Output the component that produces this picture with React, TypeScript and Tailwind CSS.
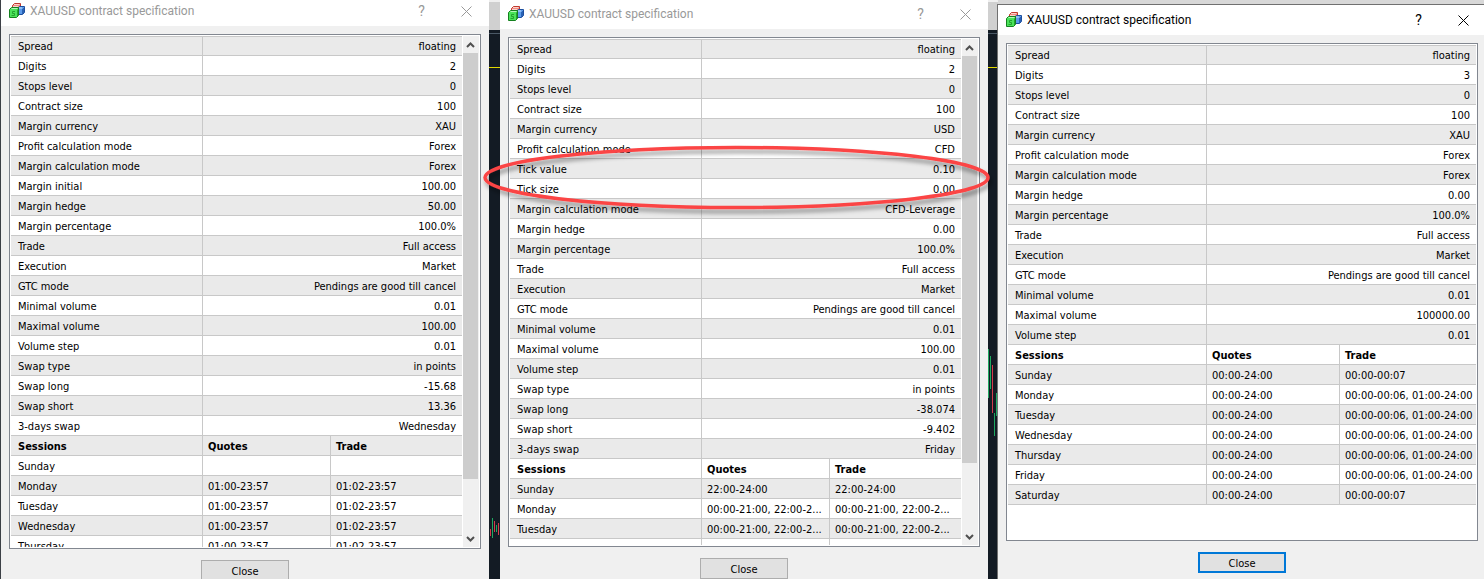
import clsx from "clsx";

type SpecRow = [string, string];
type SessionRow = [string, string, string];

interface Spec {
    rows: SpecRow[];
    sessions: SessionRow[];
}

const first: Spec = {
    rows: [
        ["Spread", "floating"],
        ["Digits", "2"],
        ["Stops level", "0"],
        ["Contract size", "100"],
        ["Margin currency", "XAU"],
        ["Profit calculation mode", "Forex"],
        ["Margin calculation mode", "Forex"],
        ["Margin initial", "100.00"],
        ["Margin hedge", "50.00"],
        ["Margin percentage", "100.0%"],
        ["Trade", "Full access"],
        ["Execution", "Market"],
        ["GTC mode", "Pendings are good till cancel"],
        ["Minimal volume", "0.01"],
        ["Maximal volume", "100.00"],
        ["Volume step", "0.01"],
        ["Swap type", "in points"],
        ["Swap long", "-15.68"],
        ["Swap short", "13.36"],
        ["3-days swap", "Wednesday"],
    ],
    sessions: [
        ["Sunday", "", ""],
        ["Monday", "01:00-23:57", "01:02-23:57"],
        ["Tuesday", "01:00-23:57", "01:02-23:57"],
        ["Wednesday", "01:00-23:57", "01:02-23:57"],
        ["Thursday", "01:00-23:57", "01:02-23:57"],
    ],
};

const second: Spec = {
    rows: [
        ["Spread", "floating"],
        ["Digits", "2"],
        ["Stops level", "0"],
        ["Contract size", "100"],
        ["Margin currency", "USD"],
        ["Profit calculation mode", "CFD"],
        ["Tick value", "0.10"],
        ["Tick size", "0.00"],
        ["Margin calculation mode", "CFD-Leverage"],
        ["Margin hedge", "0.00"],
        ["Margin percentage", "100.0%"],
        ["Trade", "Full access"],
        ["Execution", "Market"],
        ["GTC mode", "Pendings are good till cancel"],
        ["Minimal volume", "0.01"],
        ["Maximal volume", "100.00"],
        ["Volume step", "0.01"],
        ["Swap type", "in points"],
        ["Swap long", "-38.074"],
        ["Swap short", "-9.402"],
        ["3-days swap", "Friday"],
    ],
    sessions: [
        ["Sunday", "22:00-24:00", "22:00-24:00"],
        ["Monday", "00:00-21:00, 22:00-2...", "00:00-21:00, 22:00-2..."],
        ["Tuesday", "00:00-21:00, 22:00-2...", "00:00-21:00, 22:00-2..."],
        ["Wednesday", "00:00-21:00, 22:00-2...", "00:00-21:00, 22:00-2..."],
    ],
};

const third: Spec = {
    rows: [
        ["Spread", "floating"],
        ["Digits", "3"],
        ["Stops level", "0"],
        ["Contract size", "100"],
        ["Margin currency", "XAU"],
        ["Profit calculation mode", "Forex"],
        ["Margin calculation mode", "Forex"],
        ["Margin hedge", "0.00"],
        ["Margin percentage", "100.0%"],
        ["Trade", "Full access"],
        ["Execution", "Market"],
        ["GTC mode", "Pendings are good till cancel"],
        ["Minimal volume", "0.01"],
        ["Maximal volume", "100000.00"],
        ["Volume step", "0.01"],
    ],
    sessions: [
        ["Sunday", "00:00-24:00", "00:00-00:07"],
        ["Monday", "00:00-24:00", "00:00-00:06, 01:00-24:00"],
        ["Tuesday", "00:00-24:00", "00:00-00:06, 01:00-24:00"],
        ["Wednesday", "00:00-24:00", "00:00-00:06, 01:00-24:00"],
        ["Thursday", "00:00-24:00", "00:00-00:06, 01:00-24:00"],
        ["Friday", "00:00-24:00", "00:00-00:06, 01:00-24:00"],
        ["Saturday", "00:00-24:00", "00:00-00:07"],
    ],
};

function CubesIcon() {
    return (
        <svg className="size-4 shrink-0" viewBox="0 0 16 16" aria-hidden="true">
            <path d="M3.500 2.500 L5.500 0.500 H11.500 V5.500 H3.500 Z" fill="#f08a80" stroke="#c0392f" />
            <path d="M5 1.500 H10.500 M4 3.500 H9" stroke="#fbd3cd" />
            <path d="M8.500 5.500 L10.500 3.500 H15.500 V9.500 L13.500 11.500 H8.500 Z" fill="#5b9bea" stroke="#1d4f9e" />
            <path d="M13.500 6 V11 M14.500 5 V10" stroke="#2a62b4" />
            <path d="M10 5 H13" stroke="#c4defa" />
            <path d="M0.500 6.500 L2.500 4.500 H9.500 V12.500 L7.500 14.500 H0.500 Z" fill="#4be35a" stroke="#15801f" />
            <path d="M2.500 5.500 H8.500" stroke="#b4f7b8" />
            <path d="M8.500 6.500 V13" stroke="#23a32e" />
            <path d="M6 8.500 H3.500 V10.500 H5.500 V12.500 H2.500" stroke="#23a32e" fill="none" />
        </svg>
    );
}

function Arrow({ down }: { down?: boolean }) {
    return (
        <svg className="w-[9px] h-1.5" viewBox="0 0 9 6" fill="none" stroke="#505050" strokeWidth="2" aria-hidden="true">
            <path d={down ? "M1 1 L4.500 4.500 L8 1" : "M1 5 L4.500 1.500 L8 5"} />
        </svg>
    );
}

function ScrollBar({ thumb }: { thumb: string }) {
    return (
        <div className="w-4 shrink-0 pr-px bg-[#f0f0f0] flex flex-col">
            <button aria-label="Scroll up" className="h-[17px] flex items-center justify-center">
                <Arrow />
            </button>
            <div className="flex-1">
                <div className={clsx("bg-[#cdcdcd]", thumb)}></div>
            </div>
            <button aria-label="Scroll down" className="h-[17px] flex items-center justify-center">
                <Arrow down />
            </button>
        </div>
    );
}

function SpecTable({ spec, cols }: { spec: Spec; cols: [string, string] }) {
    const cell = "h-5 pt-0.5 pb-0 pr-0 border-b border-[#c8c8c8] whitespace-nowrap";
    return (
        <table className="w-full table-fixed border-separate border-spacing-0 text-[11px] leading-4 text-black">
            <colgroup>
                <col className={cols[0]} />
                <col className={cols[1]} />
                <col />
            </colgroup>
            <tbody>
                {spec.rows.map(([name, value], i) => (
                    <tr key={name} className="odd:bg-[#eaeaea]">
                        <th scope="row" className={clsx(cell, "pl-[7px] border-r text-left font-normal", i === 0 && "border-t")}>{name}</th>
                        <td colSpan={2} className={clsx("h-5 pt-0.5 pb-0 pl-0 pr-1.5 border-b border-[#c8c8c8] text-right whitespace-nowrap", i === 0 && "border-t")}>{value}</td>
                    </tr>
                ))}
                <tr className="odd:bg-[#eaeaea] text-left font-bold">
                    <th className={clsx(cell, "pl-[7px] border-r")}>Sessions</th>
                    <th className={clsx(cell, "pl-[5px] border-r")}>Quotes</th>
                    <th className={clsx(cell, "pl-[5px]")}>Trade</th>
                </tr>
                {spec.sessions.map(([day, quotes, trade]) => (
                    <tr key={day} className="odd:bg-[#eaeaea]">
                        <th scope="row" className={clsx(cell, "pl-[7px] border-r text-left font-normal")}>{day}</th>
                        <td className={clsx(cell, "pl-[5px] border-r")}>{quotes}</td>
                        <td className={clsx(cell, "pl-[5px]")}>{trade}</td>
                    </tr>
                ))}
            </tbody>
        </table>
    );
}

interface DialogProps {
    spec: Spec;
    cols: [string, string];
    listHeight: string;
    thumb?: string;
    active?: boolean;
    className?: string;
    children?: React.ReactNode;
}

function Dialog({ spec, cols, listHeight, thumb, active, className, children }: DialogProps) {
    return (
        <section className={clsx("relative bg-[#f0f0f0]", className)}>
            <header className={clsx("h-[30px] pl-2 bg-white flex items-center font-[Roboto,sans-serif]", active ? "text-black" : "text-[#999999]")}>
                <CubesIcon />
                <h2 className="flex-1 pl-[5px] text-[12px] leading-4 whitespace-nowrap">XAUUSD contract specification</h2>
                <button aria-label="Help" className="w-[45px] h-full text-[14px]">?</button>
                <button aria-label="Close window" className="w-[45px] h-full flex items-center justify-center">
                    <svg className="size-[11px]" viewBox="0 0 11 11" stroke="currentColor" aria-hidden="true">
                        <path d="M0.500 0.500 L10.500 10.500 M10.500 0.500 L0.500 10.500" />
                    </svg>
                </button>
            </header>
            <div className={clsx("mt-2 mx-2 p-px border border-[#828790] bg-white flex", listHeight)}>
                <div className={clsx("flex-1 min-w-0 overflow-hidden", thumb && "pr-px")}>
                    <SpecTable spec={spec} cols={cols} />
                </div>
                {thumb && <ScrollBar thumb={thumb} />}
            </div>
            <button
                className={clsx(
                    "block mx-auto mt-[11px] w-[88px] h-[21px] pt-0.5 bg-[#e1e1e1] text-[11px] leading-4 text-black",
                    active ? "border-2 border-[#0078d7]" : "border border-[#adadad]"
                )}
            >
                Close
            </button>
            {children}
        </section>
    );
}

// strip of the chart that shows between two dialogs
function Gap({ children }: { children?: React.ReactNode }) {
    return (
        <div className="flex flex-col bg-[#131b24] overflow-hidden">
            <div className="h-[30px] shrink-0 border-t-2 border-[#f0f0f0] bg-[#d0d0d0]"></div>
            <div className="h-[38px] shrink-0 pt-[3px] flex flex-col justify-between">
                <div className="h-px bg-[#4b5966]"></div>
                <div className="h-px bg-[#e0d800]"></div>
            </div>
            {children}
        </div>
    );
}

export default function App() {
    return (
        <main className="h-screen overflow-hidden bg-[#d8d8d8] grid grid-cols-[1px_488fr_11px_488fr_10px_486fr] font-['DejaVu_Sans_Condensed','DejaVu_Sans',sans-serif]">
            <div className="bg-[#3c4046]"></div>
            <Dialog spec={first} cols={["w-[192px]", "w-[128px]"]} listHeight="h-[515px]" thumb="h-[426px]" className="-mt-1" />
            <Gap>
                <svg className="mt-[450px] w-[11px] h-5 shrink-0" viewBox="0 0 11 20" aria-hidden="true">
                    <path d="M1.500 11 V18 M5.500 3 V14 M9.500 5 V17" stroke="#d23c4b" />
                    <path d="M3.500 0 V20 M7.500 7 V14" stroke="#1fa860" />
                </svg>
            </Gap>
            <Dialog spec={second} cols={["w-[192px]", "w-[128px]"]} listHeight="h-[510px]" thumb="h-[407px]" className="z-10 -mt-px">
                <svg className="absolute top-[144px] -left-5 w-[514px] h-[76px]" viewBox="0 0 514 76" fill="none" aria-hidden="true">
                    <defs>
                        <filter id="soft" x="-5%" y="-20%" width="110%" height="150%">
                            <feDropShadow dx="2" dy="4" stdDeviation="2" floodColor="#000" floodOpacity="0.4" />
                        </filter>
                    </defs>
                    <ellipse cx="256.500" cy="34.500" rx="251.500" ry="30" stroke="#fb4444" strokeWidth="3.500" filter="url(#soft)" />
                </svg>
            </Dialog>
            <Gap>
                <svg className="mt-[280px] w-[10px] h-[90px] shrink-0" viewBox="0 0 10 90" aria-hidden="true">
                    <path d="M0.500 1 V50 M2.500 8 V41 M6.500 65 V88 M8.500 45 V68" stroke="#1fa860" />
                    <path d="M4.500 17 V65" stroke="#d23c4b" />
                </svg>
            </Gap>
            <Dialog spec={third} cols={["w-[199px]", "w-[133px]"]} listHeight="h-[498px]" active className="mt-[5px] -mr-0.5 outline outline-[#707070]" />
        </main>
    );
}
